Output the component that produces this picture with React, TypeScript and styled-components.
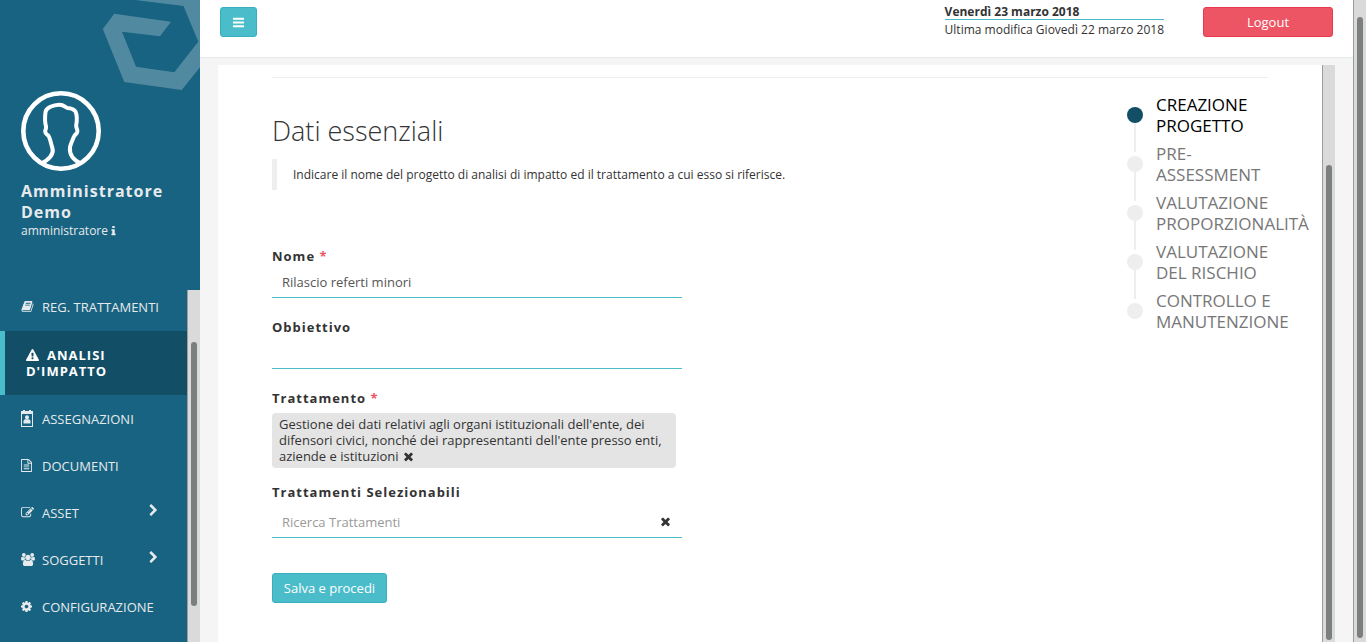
import React from "react";
import styled, { createGlobalStyle, css } from "styled-components";

const color = {
  side: "#176381",
  sideDark: "#124f67",
  accent: "#4bbcc9",
  accentDark: "#38afbd",
  danger: "#ed5565",
  dangerDark: "#ea394c",
  text: "#333333",
  track: "#dadada",
  thumb: "#7b7f7f",
};

const GlobalStyle = createGlobalStyle`
  *, *::before, *::after { box-sizing: border-box; }
  html, body, #root { height: 100%; }
  body {
    margin: 0;
    overflow: hidden;
    background: #f5f5f5;
    color: ${color.text};
    font-family: "Open Sans", "Noto Sans", sans-serif;
    font-size: 13px;
    line-height: 16px;
  }
  button, input { font: inherit; color: inherit; }
  h1, h2, p, ul, ol { margin: 0; padding: 0; }
  ul, ol { list-style: none; }
`;

/* ---------- icons ---------- */

const glyphs = {
  bars: "M1664 1344v128q0 26-19 45t-45 19h-1408q-26 0-45-19t-19-45v-128q0-26 19-45t45-19h1408q26 0 45 19t19 45zm0-512v128q0 26-19 45t-45 19h-1408q-26 0-45-19t-19-45v-128q0-26 19-45t45-19h1408q26 0 45 19t19 45zm0-512v128q0 26-19 45t-45 19h-1408q-26 0-45-19t-19-45v-128q0-26 19-45t45-19h1408q26 0 45 19t19 45z",
  times: "M1490 1322q0 40-28 68l-136 136q-28 28-68 28t-68-28l-294-294-294 294q-28 28-68 28t-68-28l-136-136q-28-28-28-68t28-68l294-294-294-294q-28-28-28-68t28-68l136-136q28-28 68-28t68 28l294 294 294-294q28-28 68-28t68 28l136 136q28 28 28 68t-28 68l-294 294 294 294q28 28 28 68z",
  cog: "M1152 896q0-106-75-181t-181-75-181 75-75 181 75 181 181 75 181-75 75-181zm512-109v222q0 12-8 23t-20 13l-185 28q-19 54-39 91 35 50 107 138 10 12 10 25t-9 23q-27 37-99 108t-94 71q-12 0-26-9l-138-108q-44 23-91 38-16 136-29 186-7 28-36 28h-222q-14 0-24.500-8.500t-11.500-21.500l-28-184q-49-16-90-37l-141 107q-10 9-25 9-14 0-25-11-126-114-165-168-7-10-7-23 0-12 8-23 15-21 51-66.500t54-70.500q-27-50-41-99l-183-27q-13-2-21-12.500t-8-23.500v-222q0-12 8-23t19-13l186-28q14-46 39-92-40-57-107-138-10-12-10-24 0-10 9-23 26-36 98.500-107.500t94.500-71.500q13 0 26 10l138 107q44-23 91-38 16-136 29-186 7-28 36-28h222q14 0 24.500 8.500t11.500 21.500l28 184q49 16 90 37l142-107q9-9 24-9 13 0 25 10 129 119 165 170 7 8 7 22 0 12-8 23-15 21-51 66.500t-54 70.500q26 50 41 98l183 28q13 2 21 12.500t8 23.500z",
  chevron: "M1363 877l-742 742q-19 19-45 19t-45-19l-166-166q-19-19-19-45t19-45l531-531-531-531q-19-19-19-45t19-45l166-166q19-19 45-19t45 19l742 742q19 19 19 45t-19 45z",
  warning: "M1024 1375v-190q0-14-9.500-23.500t-22.500-9.500h-192q-13 0-22.500 9.500t-9.500 23.500v190q0 14 9.500 23.500t22.500 9.500h192q13 0 22.500-9.500t9.500-23.500zm-2-374l18-459q0-12-10-19-13-11-24-11h-220q-11 0-24 11-10 7-10 21l17 457q0 10 10 16.500t24 6.500h185q14 0 23.500-6.500t10.500-16.500zm-14-934l768 1408q35 63-2 126-17 29-46.500 46t-63.500 17h-1536q-34 0-63.500-17t-46.500-46q-37-63-2-126l768-1408q17-31 47-49t65-18 65 18 47 49z",
  book: "M1703 478q40 57 18 129l-275 906q-19 64-76.500 107.500t-122.500 43.500h-923q-77 0-148.500-53.500t-99.500-131.500q-24-67-2-127 0-4 3-27t4-37q1-8-3-21.500t-3-19.500q2-11 8-21t16.500-23.500 16.500-23.500q23-38 45-91.500t30-91.500q3-10 .5-30t-.5-28q3-11 17-28t17-23q21-36 42-92t25-90q1-9-2.500-32t.5-28q4-13 22-30.500t22-22.500q19-26 42.500-84.500t27.500-96.500q1-8-3-25.500t-2-26.500q2-8 9-18t18-23 17-21q8-12 16.500-30.500t15-35 16-36 19.500-32 26.500-23.500 36-11.500 47.500 5.500l-1 3q38-9 51-9h761q74 0 114 56t18 130l-274 906q-36 119-71.500 153.500t-128.500 34.500h-869q-27 0-38 15-11 16-1 43 24 70 144 70h923q29 0 56-15.500t35-41.500l300-987q7-22 5-57 38 15 59 43zm-1064 2q-4 13 2 22.500t20 9.500h608q13 0 25.500-9.500t16.500-22.500l21-64q4-13-2-22.500t-20-9.500h-608q-13 0-25.500 9.500t-16.500 22.500zm-83 256q-4 13 2 22.500t20 9.500h608q13 0 25.500-9.500t16.500-22.500l21-64q4-13-2-22.500t-20-9.500h-608q-13 0-25.500 9.500t-16.500 22.500z",
  file: "M1596 380q28 28 48 76t20 88v1152q0 40-28 68t-68 28h-1344q-40 0-68-28t-28-68v-1600q0-40 28-68t68-28h896q40 0 88 20t76 48zm-444-244v376h376q-10-29-22-41l-313-313q-12-12-41-22zm384 1528v-1024h-416q-40 0-68-28t-28-68v-416h-768v1536h1280zm-1024-864q0-14 9-23t23-9h704q14 0 23 9t9 23v64q0 14-9 23t-23 9h-704q-14 0-23-9t-9-23v-64zm736 224q14 0 23 9t9 23v64q0 14-9 23t-23 9h-704q-14 0-23-9t-9-23v-64q0-14 9-23t23-9h704zm0 256q14 0 23 9t9 23v64q0 14-9 23t-23 9h-704q-14 0-23-9t-9-23v-64q0-14 9-23t23-9h704z",
  edit: "M888 1184l116-116-152-152-116 116v56h96v96h56zm440-720q-16-16-33 1l-350 350q-17 17-1 33t33-1l350-350q17-17 1-33zm80 594v190q0 119-84.500 203.500t-203.500 84.500h-832q-119 0-203.500-84.500t-84.500-203.500v-832q0-119 84.500-203.500t203.500-84.500h832q63 0 117 25 15 7 18 23 3 17-9 29l-49 49q-14 14-32 8-23-6-45-6h-832q-66 0-113 47t-47 113v832q0 66 47 113t113 47h832q66 0 113-47t47-113v-126q0-13 9-22l64-64q15-15 35-7t20 29zm-96-738l288 288-672 672h-288v-288zm444 132l-92 92-288-288 92-92q28-28 68-28t68 28l152 152q28 28 28 68t-28 68z",
  users: "M529 896q-162 5-265 128h-134q-82 0-138-40.500t-56-118.500q0-353 124-353 6 0 43.500 21t97.500 42.500 119 21.500q67 0 133-23-5 37-5 66 0 139 81 256zm1071 637q0 120-73 189.500t-194 69.500h-874q-121 0-194-69.500t-73-189.500q0-53 3.500-103.500t14-109 26.500-108.500 43-97.500 62-81 85.500-53.500 111.500-20q10 0 43 21.500t73 48 107 48 135 21.500 135-21.500 107-48 73-48 43-21.500q61 0 111.500 20t85.500 53.500 62 81 43 97.500 26.500 108.500 14 109 3.500 103.500zm-1024-1277q0 106-75 181t-181 75-181-75-75-181 75-181 181-75 181 75 75 181zm704 384q0 159-112.500 271.500t-271.500 112.500-271.500-112.500-112.500-271.500 112.500-271.500 271.500-112.500 271.500 112.500 112.500 271.500zm576 225q0 78-56 118.500t-138 40.500h-134q-103-123-265-128 81-117 81-256 0-29-5-66 66 23 133 23 59 0 119-21.500t97.500-42.500 43.500-21q124 0 124 353zm-128-609q0 106-75 181t-181 75-181-75-75-181 75-181 181-75 181 75 75 181z",
  info: "M1216 1344v128q0 26-19 45t-45 19h-512q-26 0-45-19t-19-45v-128q0-26 19-45t45-19h64v-384h-64q-26 0-45-19t-19-45v-128q0-26 19-45t45-19h384q26 0 45 19t19 45v576h64q26 0 45 19t19 45zm-128-1152v192q0 26-19 45t-45 19h-256q-26 0-45-19t-19-45v-192q0-26 19-45t45-19h256q26 0 45 19t19 45z",
};

type GlyphName = keyof typeof glyphs;

const viewBoxes: Partial<Record<GlyphName, string>> = {
  users: "-64 0 1920 1792",
  cog: "128 128 1536 1536",
  file: "128 0 1536 1792",
  info: "512 0 768 1792",
};

const Svg = styled.svg`
  display: block;
  flex: none;
  fill: currentColor;
`;

const InlineSvg = styled(Svg)`
  display: inline-block;
  vertical-align: -2px;
`;

function Glyph({ name, w, h, inline }: { name: GlyphName; w: number; h: number; inline?: boolean }) {
  const Tag = inline ? InlineSvg : Svg;
  return (
    <Tag width={w} height={h} viewBox={viewBoxes[name] ?? "0 0 1792 1792"} aria-hidden="true">
      <path d={glyphs[name]} />
    </Tag>
  );
}

function BadgeIcon() {
  return (
    <Svg width="12" height="17" viewBox="0 0 12 17" aria-hidden="true">
      <path fillRule="evenodd" d="M0 1h2V0h2v1h4V0h2v1h2v16H0zM1 4v12h10V4z" />
      <circle cx="6" cy="7.300" r="2" />
      <path d="M2.500 13.500V11.200Q2.600 9.300 4.600 9.200H7.400Q9.400 9.300 9.500 11.200V13.500z" />
    </Svg>
  );
}

/* ---------- scroll rail ---------- */

const Rail = styled.div`
  flex: none;
  display: flex;
  flex-direction: column;
  width: 13px;
  padding: 0 3px;
  background: ${color.track};
  border-left: 1px solid #9c9c9c;
`;

const Gap = styled.div``;

const Thumb = styled.div`
  width: 6px;
  border-radius: 3px;
  background: ${color.thumb};
`;

function ScrollRail({ before, size, after }: { before: number; size: number; after: number }) {
  return (
    <Rail aria-hidden="true">
      <Gap style={{ flexGrow: before }} />
      <Thumb style={{ flexGrow: size }} />
      <Gap style={{ flexGrow: after }} />
    </Rail>
  );
}

/* ---------- sidebar ---------- */

const Shell = styled.div`
  display: flex;
  height: 100vh;
`;

const Sidebar = styled.aside`
  flex: none;
  display: flex;
  flex-direction: column;
  width: 200px;
  background: ${color.side};
  color: #e7eaec;
`;

const Profile = styled.div`
  position: relative;
  flex: none;
  height: 290px;
  padding: 91px 21px 0;
`;

const Mark = styled.svg`
  position: absolute;
  top: 0;
  right: 0;
  fill: #ffffff;
  fill-opacity: 0.25;
`;

const Avatar = styled.svg`
  display: block;
  margin-bottom: 10px;
  fill: none;
  stroke: #ffffff;
`;

const UserName = styled.h2`
  font-size: 16px;
  font-weight: 700;
  line-height: 21px;
  letter-spacing: 1px;
`;

const Role = styled.p`
  display: flex;
  align-items: center;
  gap: 3px;
  font-size: 12px;
`;

const MenuArea = styled.div`
  flex: 1;
  display: flex;
  min-height: 0;
`;

const Menu = styled.nav`
  flex: 1;
  overflow: hidden;
`;

const MenuLink = styled.a<{ $active?: boolean; $first?: boolean }>`
  display: flex;
  align-items: center;
  gap: 8px;
  height: 47px;
  padding: 0 27px 0 21px;
  color: inherit;
  text-decoration: none;
  ${(p) =>
    p.$first &&
    css`
      height: 41px;
      padding-bottom: 8px;
    `}
  ${(p) =>
    p.$active &&
    css`
      display: block;
      height: 64px;
      padding: 16px 50px 16px 21px;
      border-left: 5px solid ${color.accent};
      background: ${color.sideDark};
      color: #ffffff;
      font-weight: 700;
      letter-spacing: 1px;

      svg {
        margin-right: 8px;
      }
    `}
`;

const IconSlot = styled.span`
  flex: none;
  display: flex;
  width: 13px;
`;

const Arrow = styled.span`
  margin-left: auto;
  padding-bottom: 4px;
`;

/* ---------- top bar ---------- */

const Main = styled.div`
  flex: 1;
  display: flex;
  flex-direction: column;
  min-width: 0;
`;

const TopBar = styled.header`
  flex: none;
  display: flex;
  align-items: flex-start;
  height: 58px;
  padding: 7px 20px 0;
  background: #ffffff;
  border-bottom: 1px solid #e7eaec;
`;

const Button = styled.button<{ $tone?: "danger"; $width?: number }>`
  display: flex;
  align-items: center;
  justify-content: center;
  height: 30px;
  width: ${(p) => (p.$width ? `${p.$width}px` : "auto")};
  padding: 0 10px;
  border: 1px solid ${(p) => (p.$tone ? color.dangerDark : color.accentDark)};
  border-radius: 3px;
  background: ${(p) => (p.$tone ? color.danger : color.accent)};
  color: #ffffff;
  cursor: pointer;
`;

const Dates = styled.div`
  margin: -2px 39px 0 auto;
  font-size: 12px;
`;

const Today = styled.p`
  font-weight: 700;
  line-height: 14px;
  border-bottom: 1px solid ${color.accent};
`;

const LastEdit = styled.p`
  padding-top: 2px;
`;

/* ---------- content ---------- */

const Stage = styled.div`
  flex: 1;
  display: flex;
  min-height: 0;
  padding: 7px 18px 0;
`;

const Panel = styled.main`
  flex: 1;
  min-width: 0;
  overflow: hidden;
  padding: 12px 54px 0;
  background: #ffffff;
`;

const Rule = styled.hr`
  height: 1px;
  margin: 0;
  border: 0;
  background: #eeeeee;
`;

const Columns = styled.div`
  display: flex;
  justify-content: space-between;
`;

const Title = styled.h1`
  margin: 34px 0 10px;
  font-size: 27px;
  font-weight: 300;
  line-height: 37px;
`;

const Hint = styled.p`
  margin-bottom: 58px;
  padding: 8px 16px 7px;
  border-left: 5px solid #eeeeee;
  font-size: 12px;
`;

const Form = styled.form`
  width: 410px;
`;

const Field = styled.div`
  display: flex;
  flex-direction: column;
  margin-bottom: 21px;
`;

const Label = styled.label`
  font-weight: 700;
  letter-spacing: 1px;
`;

const Required = styled.span`
  color: ${color.danger};
`;

const InputRow = styled.div<{ $spaced?: boolean }>`
  display: flex;
  align-items: center;
  height: 34px;
  margin-top: ${(p) => (p.$spaced ? 4 : 0)}px;
  padding-top: 2px;
  border-bottom: 1px solid ${color.accent};
`;

const Input = styled.input`
  flex: 1;
  min-width: 0;
  height: 30px;
  padding: 0 10px;
  border: 0;
  outline: 0;
  background: transparent;
  color: #555555;

  &::placeholder {
    color: #999999;
    opacity: 1;
  }
`;

const IconButton = styled.button`
  display: inline-block;
  padding: 0;
  border: 0;
  background: none;
  cursor: pointer;
`;

const ClearButton = styled(IconButton)`
  margin-right: 10px;
`;

const Chip = styled.div`
  width: 404px;
  margin: 7px 0 16px;
  padding: 3px 7px 4px;
  border-radius: 4px;
  background: #e4e4e4;
`;

const Submit = styled(Button)`
  margin-top: 35px;
`;

const Steps = styled.ol`
  flex: none;
  width: 149px;
  margin: 16px -8px 0 0;
`;

const Step = styled.li<{ $current?: boolean }>`
  display: flex;
  gap: 13px;
  height: 49px;
  color: ${(p) => (p.$current ? "#000000" : "#777777")};
  font-size: 17px;
  line-height: 21px;
`;

const StepTrack = styled.span<{ $last?: boolean }>`
  flex: none;
  display: flex;
  flex-direction: column;
  align-items: center;
  width: 16px;
  padding-top: 13px;

  &::after {
    content: "";
    flex: none;
    width: 2px;
    height: ${(p) => (p.$last ? 0 : 29)}px;
    background: #eeeeee;
  }
`;

const Dot = styled.span<{ $current?: boolean }>`
  flex: none;
  width: 16px;
  height: 16px;
  border-radius: 50%;
  background: ${(p) => (p.$current ? color.sideDark : "#eeeeee")};
`;

const StepText = styled.span`
  width: 120px;
`;

const menu: { label: string; icon: React.ReactNode; arrow?: boolean }[] = [
  { label: "ASSEGNAZIONI", icon: <BadgeIcon /> },
  { label: "DOCUMENTI", icon: <Glyph name="file" w={11} h={13} /> },
  { label: "ASSET", icon: <Glyph name="edit" w={13} h={13} />, arrow: true },
  { label: "SOGGETTI", icon: <Glyph name="users" w={14} h={13} />, arrow: true },
  { label: "CONFIGURAZIONE", icon: <Glyph name="cog" w={11} h={11} /> },
];

const steps = [
  "CREAZIONE PROGETTO",
  "PRE-ASSESSMENT",
  "VALUTAZIONE PROPORZIONALITÀ",
  "VALUTAZIONE DEL RISCHIO",
  "CONTROLLO E MANUTENZIONE",
];

export default function App() {
  return (
    <Shell>
      <GlobalStyle />
      <Sidebar>
        <Profile>
          <Mark width="100" height="92" viewBox="100 0 100 92" aria-hidden="true">
            <path d="M114.300 13.700L171 21.700L160 36.200L122 31.700L136 66.800L174.300 72.200L198.300 41.700L183.500 6L135.500 0H200V67.300L181.700 90L124.300 82L102.800 29z" />
          </Mark>
          <Avatar width="80" height="80" viewBox="0 0 80 80" aria-hidden="true">
            <circle cx="40" cy="40" r="37.700" strokeWidth="4.600" />
            <path
              strokeWidth="4"
              strokeLinejoin="round"
              d="M20 72.500C28 69 33 63 31.500 57.500C30 53 29 46.500 27.300 44.500C25.500 43 24.200 43 24.200 40.500C24.200 38 25.500 38 25 35.500C24 32 24 25 24.500 21C25.500 16.500 32 14 38.500 13.800C43 13.700 44 16.500 46.500 17C50 17.300 52.500 17.500 54.500 20.500C56 24 56 30 55.200 34.500C55 37 56.500 37.500 56.300 40.500C56 43.500 54 43 53 45.500C51.500 49 50 52 49 56C48.300 62 51 68.500 60 72.500"
            />
          </Avatar>
          <UserName>Amministratore Demo</UserName>
          <Role>
            amministratore
            <Glyph name="info" w={5} h={12} />
          </Role>
        </Profile>
        <MenuArea>
          <Menu>
            <MenuLink href="#registro" $first>
              <IconSlot>
                <Glyph name="book" w={13} h={13} />
              </IconSlot>
              REG. TRATTAMENTI
            </MenuLink>
            <MenuLink href="#analisi" $active aria-current="page">
              <Glyph name="warning" w={13} h={13} inline />
              ANALISI D'IMPATTO
            </MenuLink>
            {menu.map((item) => (
              <MenuLink key={item.label} href={`#${item.label.toLowerCase()}`}>
                <IconSlot>{item.icon}</IconSlot>
                {item.label}
                {item.arrow && (
                  <Arrow>
                    <Glyph name="chevron" w={13} h={13} />
                  </Arrow>
                )}
              </MenuLink>
            ))}
          </Menu>
          <ScrollRail before={52} size={264} after={36} />
        </MenuArea>
      </Sidebar>

      <Main>
        <TopBar>
          <Button type="button" $width={37} aria-label="Menu">
            <Glyph name="bars" w={13} h={13} />
          </Button>
          <Dates>
            <Today>Venerdì 23 marzo 2018</Today>
            <LastEdit>Ultima modifica Giovedì 22 marzo 2018</LastEdit>
          </Dates>
          <Button type="button" $tone="danger" $width={130}>
            Logout
          </Button>
        </TopBar>
        <Stage>
          <Panel>
            <Rule />
            <Columns>
              <div>
                <Title>Dati essenziali</Title>
                <Hint>
                  Indicare il nome del progetto di analisi di impatto ed il trattamento a cui esso si
                  riferisce.
                </Hint>
                <Form onSubmit={(e) => e.preventDefault()}>
                  <Field>
                    <Label htmlFor="nome">
                      Nome <Required>*</Required>
                    </Label>
                    <InputRow>
                      <Input id="nome" type="text" defaultValue="Rilascio referti minori" />
                    </InputRow>
                  </Field>
                  <Field>
                    <Label htmlFor="obbiettivo">Obbiettivo</Label>
                    <InputRow>
                      <Input id="obbiettivo" type="text" />
                    </InputRow>
                  </Field>
                  <Label as="div">
                    Trattamento <Required>*</Required>
                  </Label>
                  <Chip>
                    Gestione dei dati relativi agli organi istituzionali dell'ente, dei difensori
                    civici, nonché dei rappresentanti dell'ente presso enti, aziende e istituzioni{" "}
                    <IconButton type="button" aria-label="Rimuovi trattamento">
                      <Glyph name="times" w={13} h={13} inline />
                    </IconButton>
                  </Chip>
                  <Field>
                    <Label htmlFor="ricerca">Trattamenti Selezionabili</Label>
                    <InputRow $spaced>
                      <Input id="ricerca" type="text" placeholder="Ricerca Trattamenti" />
                      <ClearButton type="button" aria-label="Cancella ricerca">
                        <Glyph name="times" w={13} h={13} />
                      </ClearButton>
                    </InputRow>
                  </Field>
                  <Submit type="submit" $width={115}>
                    Salva e procedi
                  </Submit>
                </Form>
              </div>
              <Steps>
                {steps.map((label, i) => (
                  <Step key={label} $current={i === 0} aria-current={i === 0 ? "step" : undefined}>
                    <StepTrack $last={i === steps.length - 1}>
                      <Dot $current={i === 0} />
                    </StepTrack>
                    <StepText>{label}</StepText>
                  </Step>
                ))}
              </Steps>
            </Columns>
          </Panel>
          <ScrollRail before={100} size={475} after={2} />
        </Stage>
      </Main>
      <ScrollRail before={17} size={621} after={4} />
    </Shell>
  );
}
